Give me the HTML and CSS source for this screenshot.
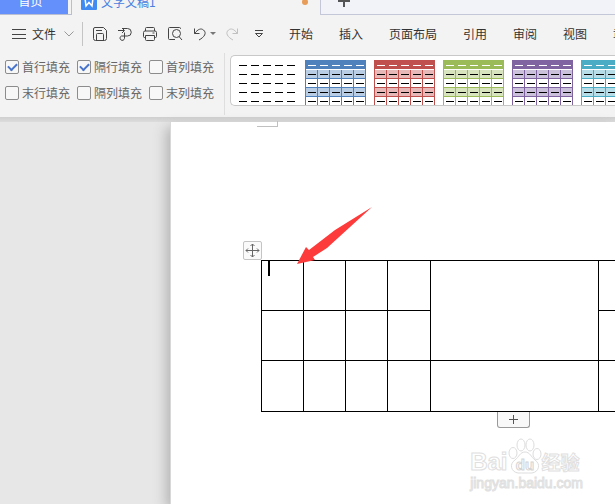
FILE: index.html
```html
<!DOCTYPE html>
<html lang="zh-CN">
<head>
<meta charset="utf-8">
<title>文字文稿1</title>
<link rel="stylesheet" href="styles.css">
</head>
<body>
<svg class="defs" aria-hidden="true">
  <symbol id="dashes" viewBox="0 0 61 45">
    <path d="M3 5.5h56M3 14.5h56M3 23.5h56M3 32.5h56M3 41.5h56" fill="none" stroke="#000" stroke-dasharray="8 4"/>
  </symbol>
  <symbol id="swatch" viewBox="0 0 61 45">
    <path class="paper" d="M0 0h61v45H0z"/>
    <path fill="currentColor" d="M0 0h61v9H0z"/>
    <path fill="currentColor" opacity=".4" d="M1 10h59v8H1zM1 28h59v8H1z"/>
    <path fill="none" stroke="currentColor" d="M.5 9v36M12.5 9v36M24.5 9v36M36.5 9v36M48.5 9v36M60.5 9v36M0 18.5h61M0 27.5h61M0 36.5h61"/>
    <path fill="none" stroke="#fff" d="M1 9.5h59"/>
    <path fill="none" stroke="#fff" stroke-dasharray="8 4" d="M3 5.5h56"/>
    <path d="M3 14.5h56M3 23.5h56M3 32.5h56M3 41.5h56" fill="none" stroke="#000" stroke-dasharray="8 4"/>
  </symbol>
</svg>
<div class="app">
  <nav class="tabs">
    <div class="home-slot"><a class="home" href="#home">首页</a></div>
    <a class="doc-tab" href="#doc">
      <svg width="16" height="16" viewBox="0 0 16 16"><rect width="16" height="16" rx="1" fill="#3f8bf2"/><path d="M4 4l1 8 3-3.500 3 3.500 1-8" fill="none" stroke="#fff" stroke-width="1.5"/></svg>
      <span>文字文稿1</span>
      <i class="unsaved"></i>
    </a>
    <div class="tab-rest">
      <button class="new-tab" aria-label="新建"><svg width="12" height="12" viewBox="0 0 12 12"><path d="M6 0v12M0 6h12" stroke="#555" stroke-width="2"/></svg></button>
    </div>
  </nav>

  <div class="menu">
    <button class="file">
      <svg width="14" height="10" viewBox="0 0 14 10"><path d="M0 .5h14M0 5.5h14M0 9.5h14" stroke="#444"/></svg>
      <span>文件</span>
      <svg class="chev" width="10" height="6" viewBox="0 0 10 6"><path d="M.5.5 5 5 9.5.5" fill="none" stroke="#999"/></svg>
    </button>
    <div class="tools">
      <button aria-label="保存"><svg width="16" height="16" viewBox="0 0 16 16"><path d="M3 1.5h8.500l3 3v8a2 2 0 0 1-2 2h-9a2 2 0 0 1-2-2V3a1.500 1.500 0 0 1 1.500-1.500zM4.500 14V8.500q0-1 1-1h5q1 0 1 1V14M4 4.500h6"/></svg></button>
      <button aria-label="输出"><svg width="16" height="16" viewBox="0 0 16 16"><path d="M1 4.500h6M5 2l2.500 2.500L5 7M6 2.500h4.500a3.750 3.750 0 0 1 0 7.500H4.500a2.250 2.250 0 1 0 3 2.500V6.500"/></svg></button>
      <button aria-label="打印"><svg width="16" height="16" viewBox="0 0 16 16"><path d="M3.500 5V2.500q0-1 1-1h7q1 0 1 1V5M3.500 11.500h-1a1 1 0 0 1-1-1V6.500q0-1.500 1.500-1.500h10q1.500 0 1.500 1.500v4a1 1 0 0 1-1 1h-1M3.500 9.500h9v4q0 1-1 1h-7q-1 0-1-1zM10.500 7h2"/></svg></button>
      <button aria-label="打印预览"><svg width="16" height="16" viewBox="0 0 16 16"><path d="M4.500 13.500h-2q-1 0-1-1v-10q0-1 1-1h10q1 0 1 1V3M12 10.500l3 3.500M4 13.500h4"/><circle cx="9.500" cy="7.500" r="4"/></svg></button>
      <button aria-label="撤销"><svg width="16" height="16" viewBox="0 0 16 16"><path d="M2.500 2.500v5H7.500M2.500 7.500C6 3 9 2 11.500 4c3.500 3 1 7-4.500 10"/></svg></button>
    </div>
    <button class="undo-more" aria-label="撤销列表"><svg width="6" height="4" viewBox="0 0 6 4"><path d="M0 0h6L3 3z" fill="#777"/></svg></button>
    <button class="redo" aria-label="恢复"><svg width="16" height="16" viewBox="0 0 16 16"><path d="M13.500 2.500v5H8.500M13.500 7.500C10 3 7 2 4.500 4c-3.500 3-1 7 4.500 10"/></svg></button>
    <button class="more" aria-label="自定义"><svg width="8" height="8" viewBox="0 0 8 8"><path d="M0 .5h8M.5 3.500 4 7l3.500-3.500z"/></svg></button>
    <div class="items">
      <a href="#start">开始</a><a href="#insert">插入</a><a href="#layout">页面布局</a><a href="#ref">引用</a><a href="#review">审阅</a><a href="#view">视图</a><a href="#chapter">章节</a>
    </div>
  </div>

  <div class="ribbon">
    <div class="checks">
      <label><input type="checkbox" checked>首行填充</label>
      <label><input type="checkbox" checked>隔行填充</label>
      <label><input type="checkbox">首列填充</label>
      <label><input type="checkbox">末行填充</label>
      <label><input type="checkbox">隔列填充</label>
      <label><input type="checkbox">末列填充</label>
    </div>
    <div class="gallery">
      <button aria-label="无样式"><svg width="61" height="45"><use href="#dashes"/></svg></button>
      <button class="blue" aria-label="蓝色"><svg width="61" height="45"><use href="#swatch"/></svg></button>
      <button class="red" aria-label="红色"><svg width="61" height="45"><use href="#swatch"/></svg></button>
      <button class="green" aria-label="绿色"><svg width="61" height="45"><use href="#swatch"/></svg></button>
      <button class="purple" aria-label="紫色"><svg width="61" height="45"><use href="#swatch"/></svg></button>
      <button class="teal" aria-label="青色"><svg width="61" height="45"><use href="#swatch"/></svg></button>
    </div>
  </div>

  <main class="workspace">
    <div class="page">
      <i class="margin-mark"></i>
      <div class="table-box">
        <table class="grid">
          <colgroup><col class="n"><col class="n"><col class="n"><col class="m"><col class="w"><col class="n"></colgroup>
          <tr><td><i class="caret"></i></td><td></td><td></td><td></td><td rowspan="2"></td><td></td></tr>
          <tr><td></td><td></td><td></td><td></td><td></td></tr>
          <tr class="last"><td></td><td></td><td></td><td></td><td></td><td></td></tr>
        </table>
        <button class="move" aria-label="移动表格"><svg width="15" height="15" viewBox="0 0 15 15"><path d="M7.500 1v13M1 7.500h13M5.500 3l2-2 2 2M5.500 12l2 2 2-2M3 5.500l-2 2 2 2M12 5.500l2 2-2 2" fill="none" stroke="#666"/></svg></button>
        <button class="add-row" aria-label="添加行"><svg width="9" height="9" viewBox="0 0 9 9"><path d="M4.500 0v9M0 4.500h9" stroke="#555"/></svg></button>
        <svg class="arrow" width="76" height="58" viewBox="0 0 76 58"><path d="M75 0 38 23 12 43 9 40 0 57 18 53 16 50 30 41z" fill="#fd3b3b"/></svg>
      </div>
    </div>
    <div class="watermark">
      <div class="brand"><span>Bai</span>
        <svg width="34" height="38" viewBox="0 0 34 38"><g fill="#fff" stroke="#ddd"><ellipse cx="5" cy="16" rx="4" ry="5.500"/><ellipse cx="13" cy="8" rx="4" ry="6"/><ellipse cx="22" cy="8" rx="4" ry="6"/><ellipse cx="29" cy="17" rx="4" ry="5.500"/><path d="M17 15c-5 0-6 5-10 8-6 4-4 12 3 13 4 0 10 0 14 0 7-1 9-9 3-13-4-3-5-8-10-8z"/></g><text class="du" x="17" y="33" text-anchor="middle">du</text></svg>
        <span class="exp">经验</span></div>
      <div class="url">jingyan.baidu.com</div>
    </div>
  </main>
</div>
</body>
</html>
```

FILE: styles.css
```css
* { box-sizing: border-box; }
body { margin: 0; font: 12px/16px "Noto Sans CJK SC", sans-serif; color: #333; background: #e7e7e7; }
button { border: 0; padding: 0; margin: 0; background: none; font: inherit; color: inherit; }
a { color: inherit; text-decoration: none; }
svg { display: block; flex: none; }
.defs { position: absolute; width: 0; height: 0; }
.paper { fill: #fff; }
.app { min-height: 100vh; display: flex; flex-direction: column; overflow: hidden; }

.tabs { display: flex; height: 15px; background: #f3f3f3; }
.home-slot { width: 72px; padding-right: 3px; border-right: 1px solid #b9bfd0; border-bottom: 1px solid #b9bfd0; }
.home { display: flex; align-items: flex-end; justify-content: center; height: 14px; padding: 0 7px 5px 0; overflow: hidden; background: #6490fb; color: #fff; }
.doc-tab { display: flex; align-items: flex-end; width: 248px; height: 10px; padding: 0 12px 0 9px; color: #4a7fe0; }
.doc-tab span { margin-left: 4px; font-size: 12px; }
.unsaved { width: 6px; height: 6px; margin: 0 0 5px auto; border-radius: 50%; background: #e79c57; }
.tab-rest { flex: 1; display: flex; align-items: flex-end; border-left: 1px solid #c3c7d8; border-bottom: 1px solid #c3c7d8; background: #f2f3f8; }
.new-tab { margin: 0 0 7px 17px; }

.menu { display: flex; align-items: center; height: 38px; background: #f3f3f3; white-space: nowrap; }
.file { display: flex; align-items: center; height: 24px; padding: 0 8px 0 12px; border-right: 1px solid #c4c4c4; }
.file span { margin: 0 8px 0 6px; }
.tools { display: flex; gap: 9px; margin-left: 9px; }
.tools svg, .redo svg, .more svg { fill: none; stroke: #444; }
.undo-more { margin-left: 2px; }
.redo { margin-left: 8px; }
.redo svg { stroke: #c0c0c0; }
.more { margin-left: 15px; }
.items { display: flex; gap: 26px; margin-left: 26px; }

.ribbon { display: flex; align-items: flex-start; height: 64px; background: #f3f3f3; }
.checks { display: grid; grid-template-columns: repeat(3, 72px); align-content: start; row-gap: 10px; flex: none; width: 225px; height: 62px; padding: 6px 0 0 5px; border-right: 1px solid #dedede; color: #666; }
.checks label { display: flex; align-items: center; gap: 3px; height: 16px; white-space: nowrap; }
.checks input { appearance: none; flex: none; width: 14px; height: 14px; margin: 0; border: 1px solid #8c8c8c; border-radius: 2px; background: #f7f7f7; display: grid; place-items: center; }
.checks input:checked::after { content: ""; width: 7px; height: 4px; margin-bottom: 2px; border: solid #4874cb; border-width: 0 0 2px 2px; transform: rotate(-45deg); }
.gallery { display: flex; align-items: flex-start; gap: 8px; flex: 1; min-width: 0; height: 51px; margin: 2px 0 0 5px; padding: 4px 0 0 5px; overflow: hidden; border: 1px solid #c8c8c8; border-right: 0; border-radius: 5px 0 0 5px; background: #fff; }
.blue { color: #4f81bd; }
.red { color: #c0504d; }
.green { color: #9bbb59; }
.purple { color: #8064a2; }
.teal { color: #4bacc6; }

.workspace { position: relative; flex: 1; display: flex; padding: 5px 0 0 171px; background: linear-gradient(#cfcfcf, #dcdcdc 5px, transparent 5px), #e7e7e7; }
.page { position: relative; flex: 1; min-width: 0; padding: 138px 0 0 90px; background: #fff; box-shadow: -1px 0 0 #d8d8d8, -5px 5px 12px #b4b4b4; }
.margin-mark { position: absolute; left: 86px; top: -1px; width: 21px; height: 6px; border: solid #c0c0c0; border-width: 0 1px 1px 0; }
.table-box { position: relative; }
.grid { width: 380px; border-collapse: collapse; table-layout: fixed; }
.grid td { height: 50px; padding: 0 0 0 6px; border: 1px solid #000; vertical-align: top; }
.grid .last td { height: 51px; }
.n { width: 42px; }
.m { width: 43px; }
.w { width: 168px; }
.caret { display: block; width: 2px; height: 15px; background: #000; }
.move { position: absolute; left: -18px; top: -19px; display: grid; place-items: center; width: 19px; height: 19px; border: 1px solid #c4c4c4; border-radius: 2px; background: #fafafa; }
.add-row { position: absolute; left: 236px; top: 152px; display: grid; place-items: center; width: 33px; height: 16px; border: 1px solid #999; border-top: 0; border-radius: 0 0 3px 3px; background: #f8f8f8; }
.arrow { position: absolute; left: 36px; top: -53px; }
.watermark { position: absolute; right: 32px; bottom: 13px; color: #fff; font-family: "Liberation Sans", "Noto Sans CJK SC", sans-serif; -webkit-text-stroke: 1px #e0e0e0; }
.brand { display: flex; align-items: flex-end; font: bold 24px/26px "Liberation Sans", sans-serif; }
.exp { font: bold 19px/26px "Noto Sans CJK SC", sans-serif; }
.du { fill: #fff; stroke: #d4d4d4; font: bold 15px "Liberation Sans", sans-serif; }
.url { font-size: 14px; line-height: 16px; }
```
